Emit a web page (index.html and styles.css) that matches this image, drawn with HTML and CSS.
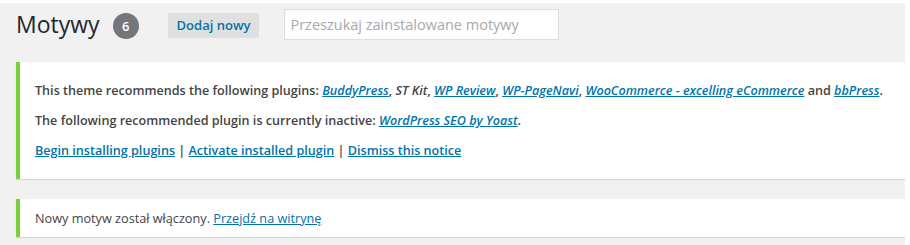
FILE: index.html
```html
<!DOCTYPE html>
<html lang="pl">
<head>
  <meta charset="UTF-8">
  <meta name="viewport" content="width=device-width, initial-scale=1.0">
  <title>Motywy</title>
  <link rel="stylesheet" href="styles.css">
</head>
<body>
  <div class="wrap">
    <div class="page-header">
      <h1>Motywy</h1>
      <span class="title-count">6</span>
      <a href="#" class="add-new">Dodaj nowy</a>
      <input type="search" class="search" placeholder="Przeszukaj zainstalowane motywy">
    </div>

    <div class="notice notice-big">
      <p><strong>This theme recommends the following plugins: <em><a href="#">BuddyPress</a></em>, <em>ST Kit</em>, <em><a href="#">WP Review</a></em>, <em><a href="#">WP-PageNavi</a></em>, <em><a href="#">WooCommerce - excelling eCommerce</a></em> and <em><a href="#">bbPress</a></em>.</strong></p>
      <p><strong>The following recommended plugin is currently inactive: <em><a href="#">WordPress SEO by Yoast</a></em>.</strong></p>
      <p><strong><a href="#">Begin installing plugins</a> | <a href="#">Activate installed plugin</a> | <a href="#">Dismiss this notice</a></strong></p>
    </div>

    <div class="notice">
      <p>Nowy motyw został włączony. <a href="#">Przejdź na witrynę</a></p>
    </div>
  </div>
</body>
</html>
```

FILE: styles.css
```css
html {
  background: #ffffff;
}
body {
  margin: 0;
  font-family: "Open Sans", "Noto Sans", sans-serif;
  font-size: 13px;
  color: #444;
}
.wrap {
  width: 905px;
  min-height: 242px;
  margin-top: 3px;
  padding: 6px 0 0 16px;
  box-sizing: border-box;
  background: #f1f1f1;
}
.page-header {
  display: flex;
  align-items: center;
  height: 31px;
}
.page-header h1 {
  margin: 0 13px 0 0;
  font-size: 23px;
  font-weight: 400;
  line-height: 29px;
  color: #23282d;
}
.title-count {
  width: 26px;
  height: 26px;
  border-radius: 50%;
  background: #72777c;
  color: #fff;
  font-size: 13px;
  font-weight: 600;
  display: flex;
  align-items: center;
  justify-content: center;
  margin: 2px 29px 0 0;
}
.add-new {
  height: 25px;
  padding: 0 9px;
  background: #e0e0e0;
  color: #0073aa;
  font-weight: 600;
  text-decoration: none;
  display: flex;
  align-items: center;
  margin: 1px 25px 0 0;
}
.search {
  width: 275px;
  height: 31px;
  box-sizing: border-box;
  border: 1px solid #ddd;
  padding: 0 5px;
  font-family: inherit;
  font-size: 14.5px;
  color: #333;
  background: #fff;
  box-shadow: inset 0 1px 2px rgba(0, 0, 0, 0.04);
}
.search::placeholder {
  color: #a9a9a9;
}
.notice {
  background: #fff;
  border-left: 4px solid #7ad03a;
  box-shadow: 0 1px 1px 0 rgba(0, 0, 0, 0.1);
  padding: 1px 12px 1px 15px;
  margin-top: 20px;
  font-size: 12.7px;
}
.notice-big {
  margin-top: 22px;
  padding: 9px 12px 8px 15px;
  font-size: 12.6px;
}
.notice p {
  margin: 8px 0;
  line-height: 20px;
}
.notice-big p {
  margin: 10px 0;
}
.notice strong {
  font-weight: 600;
}
.notice a {
  color: #0073aa;
}
```
